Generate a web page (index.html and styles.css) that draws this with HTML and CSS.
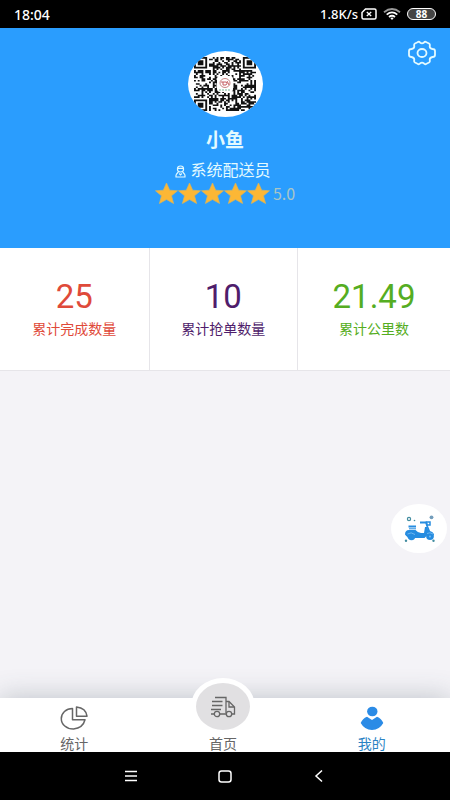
FILE: index.html
```html
<!DOCTYPE html>
<html lang="zh-CN">
<head>
<meta charset="utf-8">
<meta name="viewport" content="width=device-width, initial-scale=1">
<title>我的</title>
<link rel="stylesheet" href="styles.css">
</head>
<body>
<div class="status">
  <span class="clock">18:04</span>
  <div class="status-right">
    <span>1.8K/s</span>
    <svg width="16" height="12" viewBox="0 0 16 12" fill="none" stroke="#fff" stroke-width="1.5"><path d="M4.500 1H13.500Q15 1 15 2.500V9.500Q15 11 13.500 11H2.500Q1 11 1 9.500V4.500Z"/><path d="M5.800 4l4.400 4M10.200 4l-4.400 4" stroke-width="1.300"/></svg>
    <svg class="wifi" width="18" height="12" viewBox="0 0 18 12" fill="none" stroke="#fff" stroke-width="1.800"><path d="M1 4.200Q9-2.200 17 4.200" stroke="#999"/><path d="M3.700 6.600Q9 2.200 14.300 6.600"/><path d="M6 9Q9 6.600 12 9"/><path d="M7.300 10Q9 8.800 10.700 10L9 12Z" fill="#fff" stroke="none"/></svg>
    <span class="battery">88</span>
  </div>
</div>

<main class="page">
  <header class="hero">
    <button class="settings" aria-label="设置">
      <svg width="30" height="26" viewBox="0 0 30 26" fill="none" stroke="#e3faff" stroke-width="1.800" stroke-linejoin="round"><path d="M10.500 2.200Q12 1.200 13 2.500Q15 4.200 17 2.500Q18 1.200 19.500 2.200L22 3.500Q23.300 4.300 22.700 6Q22.600 8.500 25.500 9Q28 9 28 11V15Q28 17 25.500 17Q22.600 17.500 22.700 20Q23.300 21.700 22 22.500L19.500 23.800Q18 24.800 17 23.500Q15 21.800 13 23.500Q12 24.800 10.500 23.800L8 22.500Q6.700 21.700 7.300 20Q7.400 17.500 4.500 17Q2 17 2 15V11Q2 9 4.500 9Q7.400 8.500 7.300 6Q6.700 4.300 8 3.500Z"/><ellipse cx="15" cy="13" rx="4.500" ry="4"/></svg>
    </button>
    <div class="avatar"><svg id="qr" width="62" height="54" viewBox="0 0 33 33" preserveAspectRatio="none" role="img" aria-label="二维码"></svg>
      <svg class="avatar-mark" width="16" height="16" viewBox="0 0 16 16" fill="none"><rect width="16" height="16" rx="3" fill="#fff"/><ellipse cx="8" cy="7" rx="5" ry="4.500" stroke="#c98585"/><path d="M4 6h5q2 1 0 3H6V6M10 5l2 4" stroke="#c45b60"/><path d="M2 14h12" stroke="#79b99b" stroke-dasharray="2 1"/></svg>
    </div>
    <h1 class="name">小鱼</h1>
    <div class="role">
      <svg width="11" height="13" viewBox="0 0 11 13" fill="none" stroke="#e3faff" stroke-width="1.200"><path d="M2.500 3.500Q2.500 1 5.500 1T8.500 3.500V4.500Q8.500 7 5.500 7T2.500 4.500ZM2.500 3.300h6M3.300 7L1.500 9Q.8 10 1 12H10Q10.200 10 9.500 9L7.700 7M4.200 8.500l1.300 1.300L6.800 8.500"/></svg>
      <span>系统配送员</span>
    </div>
    <div class="rating">
      <svg width="115" height="23" viewBox="0 0 115 23" role="img" aria-label="五星"><defs><path id="star" d="M11.500 1L14.700 8.200L22.500 8.800L16.500 13.800L18.600 21.500L11.500 17.500L4.400 21.500L6.500 13.800L.5 8.800L8.300 8.200Z"/></defs><g fill="#fcb735" stroke="#d8b45c" stroke-width=".7"><use href="#star"/><use href="#star" x="23"/><use href="#star" x="46"/><use href="#star" x="69"/><use href="#star" x="92"/></g></svg>
      <span>5.0</span>
    </div>
  </header>

  <section class="stats">
    <div class="stat done"><strong>25</strong><span>累计完成数量</span></div>
    <div class="stat grabbed"><strong>10</strong><span>累计抢单数量</span></div>
    <div class="stat distance"><strong>21.49</strong><span>累计公里数</span></div>
  </section>

  <button class="float" aria-label="配送">
    <svg width="32" height="28" viewBox="0 0 32 28" fill="none" stroke="#268ce0"><path d="M5.500 11.500H13" stroke-width="2"/><path d="M6 13.800H13" stroke-width="1"/><path d="M17 7.500H23L24.500 12L26.500 17" stroke-width="1.800"/><path d="M23.500 7H27V10H24Z" stroke-width="1.500"/><path d="M2 19.500Q2 15 6 15H12.500Q15 18 18 18H21L22 12H24L25.500 16Q30 16 31 20L24 20.500L21.500 23H10Q4 23 2 19.500Z" fill="#268ce0" stroke="none"/><circle cx="8.500" cy="21" r="4.200" fill="#268ce0" stroke="none"/><circle cx="27" cy="21" r="3.900" fill="#268ce0" stroke="none"/><path d="M4.500 19Q8 16.500 12 19.500M24 18.500Q27 16.800 30 19" stroke="#8cc8f8" stroke-width=".7"/><circle cx="27" cy="21.500" r="1" fill="#73b9f3" stroke="none"/><circle cx="6" cy="4" r="1.600" stroke="#438da0" stroke-width="1.200"/><g stroke="none" fill="#438da0"><circle cx="11.500" cy="5.500" r=".8"/><circle cx="28.500" cy="2.300" r="1.900" fill="#739dbb"/><circle cx="3" cy="25.800" r="1.200"/><circle cx="30.500" cy="25.800" r="1.200"/></g></svg>
  </button>
</main>

<nav class="tabs">
  <a class="tab" href="#stats">
    <svg width="28" height="24" viewBox="0 0 28 24" fill="none" stroke="#666" stroke-width="1.500" stroke-linejoin="round"><path d="M12.500 2.500C6 2.500 1.300 7 1.300 12.700S6.500 23 13.500 23Q23 22 25 13.800H12.500Z"/><path d="M16.500 1V10.200H27Q26 2 16.500 1Z"/></svg>
    <span>统计</span>
  </a>
  <a class="tab home" href="#home">
    <span class="home-disc"><svg width="26" height="22" viewBox="0 0 26 22" fill="none" stroke="#666" stroke-width="1.300"><path d="M5 1.500H16V17M2 5.500H12.500M2 9.500H12.500M1 13.500H11M1 18H4M9.500 18H16M16 5.500H19L24.500 11V18H22"/><path d="M19 6V11H24"/><circle cx="7" cy="18" r="2.700"/><circle cx="19" cy="18" r="2.700"/></svg></span>
    <span>首页</span>
  </a>
  <a class="tab active" href="#me" aria-current="page">
    <svg width="24" height="24" viewBox="0 0 24 24" fill="#2b8be6"><ellipse cx="12.300" cy="5.500" rx="5.200" ry="4.800"/><path d="M7 10.800L12 14L17 10.800Q21.500 12.500 23.300 17Q19.500 23.800 12 24Q4.500 23.800.7 17Q2.500 12.500 7 10.800Z"/></svg>
    <span>我的</span>
  </a>
</nav>

<div class="system">
  <button aria-label="菜单"><svg width="14" height="12" viewBox="0 0 14 12" stroke="#fff" stroke-width="1.500"><path d="M1 1.500h12M1 6h12M1 10.500h12"/></svg></button>
  <button aria-label="主页"><svg width="14" height="13" viewBox="0 0 14 13" fill="none" stroke="#fff" stroke-width="1.500"><rect x="1" y="1" width="12" height="11" rx="2.500"/></svg></button>
  <button aria-label="返回"><svg width="14" height="14" viewBox="0 0 14 14" fill="none" stroke="#fff" stroke-width="1.500"><path d="M10 1.500L4 7l6 5.500"/></svg></button>
</div>
<script src="qr.js"></script>
</body>
</html>
```
FILE: styles.css
```css
* { box-sizing: border-box; }
body {
  margin: 0;
  min-height: 100vh;
  display: flex;
  flex-direction: column;
  background: #f4f3f7;
  font-family: Roboto, "Noto Sans CJK SC", sans-serif;
  font-size: 14px;
}
svg { display: block; flex: none; }
button { border: 0; padding: 0; background: none; cursor: pointer; }

.status {
  height: 28px;
  padding: 0 14px;
  display: flex;
  align-items: center;
  justify-content: space-between;
  background: #000;
  color: #fff;
  font-family: "Noto Sans", sans-serif;
  font-size: 13px;
  font-weight: 500;
}
.clock { font-size: 14px; }
.status-right { display: flex; align-items: center; gap: 3px; }
.wifi { margin: 0 3px; }
.battery {
  width: 29px;
  height: 12px;
  border: 1px solid #fff;
  border-radius: 6px;
  background: #444;
  font-size: 10px;
  font-weight: 700;
  line-height: 10px;
  text-align: center;
}

.page {
  flex: 1;
  position: relative;
  display: flex;
  flex-direction: column;
}
.hero {
  position: relative;
  height: 220px;
  padding-top: 23px;
  display: flex;
  flex-direction: column;
  align-items: center;
  background: #2a9dfe;
  color: #e3faff;
}
.settings { position: absolute; top: 12px; right: 13px; }
.avatar {
  width: 75px;
  height: 66px;
  border-radius: 50%;
  background: #fff;
  display: grid;
  place-items: center;
  overflow: hidden;
}
.avatar > svg { grid-area: 1 / 1; }
.name {
  margin: 12px 0 0;
  font-size: 19px;
  font-weight: 700;
  line-height: 24px;
}
.role {
  display: flex;
  align-items: center;
  gap: 4px;
  margin: 7px 4px 0 0;
  font-size: 16px;
  line-height: 22px;
}
.rating {
  display: flex;
  align-items: center;
  gap: 3px;
  color: #a9c6c6;
  font-family: "Noto Sans CJK SC", sans-serif;
  font-size: 16px;
  line-height: 23px;
}

.stats {
  display: grid;
  grid-template-columns: 33% 33% 1fr;
  background: #fff;
  border-bottom: 1px solid #e6e5e9;
}
.stat {
  height: 122px;
  padding-top: 30px;
  display: flex;
  flex-direction: column;
  align-items: center;
}
.stat + .stat { border-left: 1px solid #e6e5e9; }
.stat strong { font-size: 33px; font-weight: 400; line-height: 38px; }
.stat span { margin-top: 3px; line-height: 20px; }
.done { color: #df4a3a; }
.grabbed { color: #4f1d6b; }
.distance { color: #55ad22; }

.float {
  position: absolute;
  right: 3px;
  bottom: 145px;
  width: 56px;
  height: 49px;
  border-radius: 50%;
  background: #fff;
  display: grid;
  place-items: center;
}

.tabs {
  position: relative;
  display: grid;
  grid-template-columns: repeat(3, 1fr);
  grid-template-rows: 54px;
  padding-right: 4px;
  background: #fff;
  box-shadow: 0 0 28px rgba(60, 80, 90, 0.3);
}
.tab {
  display: flex;
  flex-direction: column;
  align-items: center;
  justify-content: flex-end;
  gap: 6px;
  color: #666;
  line-height: 16px;
  text-decoration: none;
}
.home-disc {
  flex: none;
  width: 64px;
  height: 57px;
  border: 5px solid #fff;
  border-radius: 50%;
  background: #e1e0e2;
  display: grid;
  place-items: center;
}
.home { gap: 1px; }
.active { color: #2b83c4; }

.system {
  position: relative;
  height: 48px;
  display: flex;
  align-items: center;
  justify-content: center;
  gap: 80px;
  background: #000;
}
```
FILE: qr.js
```js
// Builds the module grid of the profile code as a single SVG path.
const size = 33;
let seed = 20;
function random() {
  seed = (seed * 1103515245 + 12345) % 2147483648;
  return seed / 2147483648;
}
function finder(x, y) {
  const ring = Math.max(Math.abs(x - 3), Math.abs(y - 3));
  return ring === 3 || ring <= 1;
}
let d = "";
for (let y = 0; y < size; y++) {
  for (let x = 0; x < size; x++) {
    const noise = random() > 0.46;
    let on = noise;
    if (x < 8 && y < 8) on = x < 7 && y < 7 && finder(x, y);
    else if (x > size - 9 && y < 8) on = x > size - 8 && y < 7 && finder(size - 1 - x, y);
    else if (x < 8 && y > size - 9) on = x < 7 && y > size - 8 && finder(x, size - 1 - y);
    if (on) d += `M${x} ${y}h1v1h-1z`;
  }
}
const path = document.createElementNS("http://www.w3.org/2000/svg", "path");
path.setAttribute("d", d);
path.setAttribute("fill", "#111");
document.getElementById("qr").append(path);
```
